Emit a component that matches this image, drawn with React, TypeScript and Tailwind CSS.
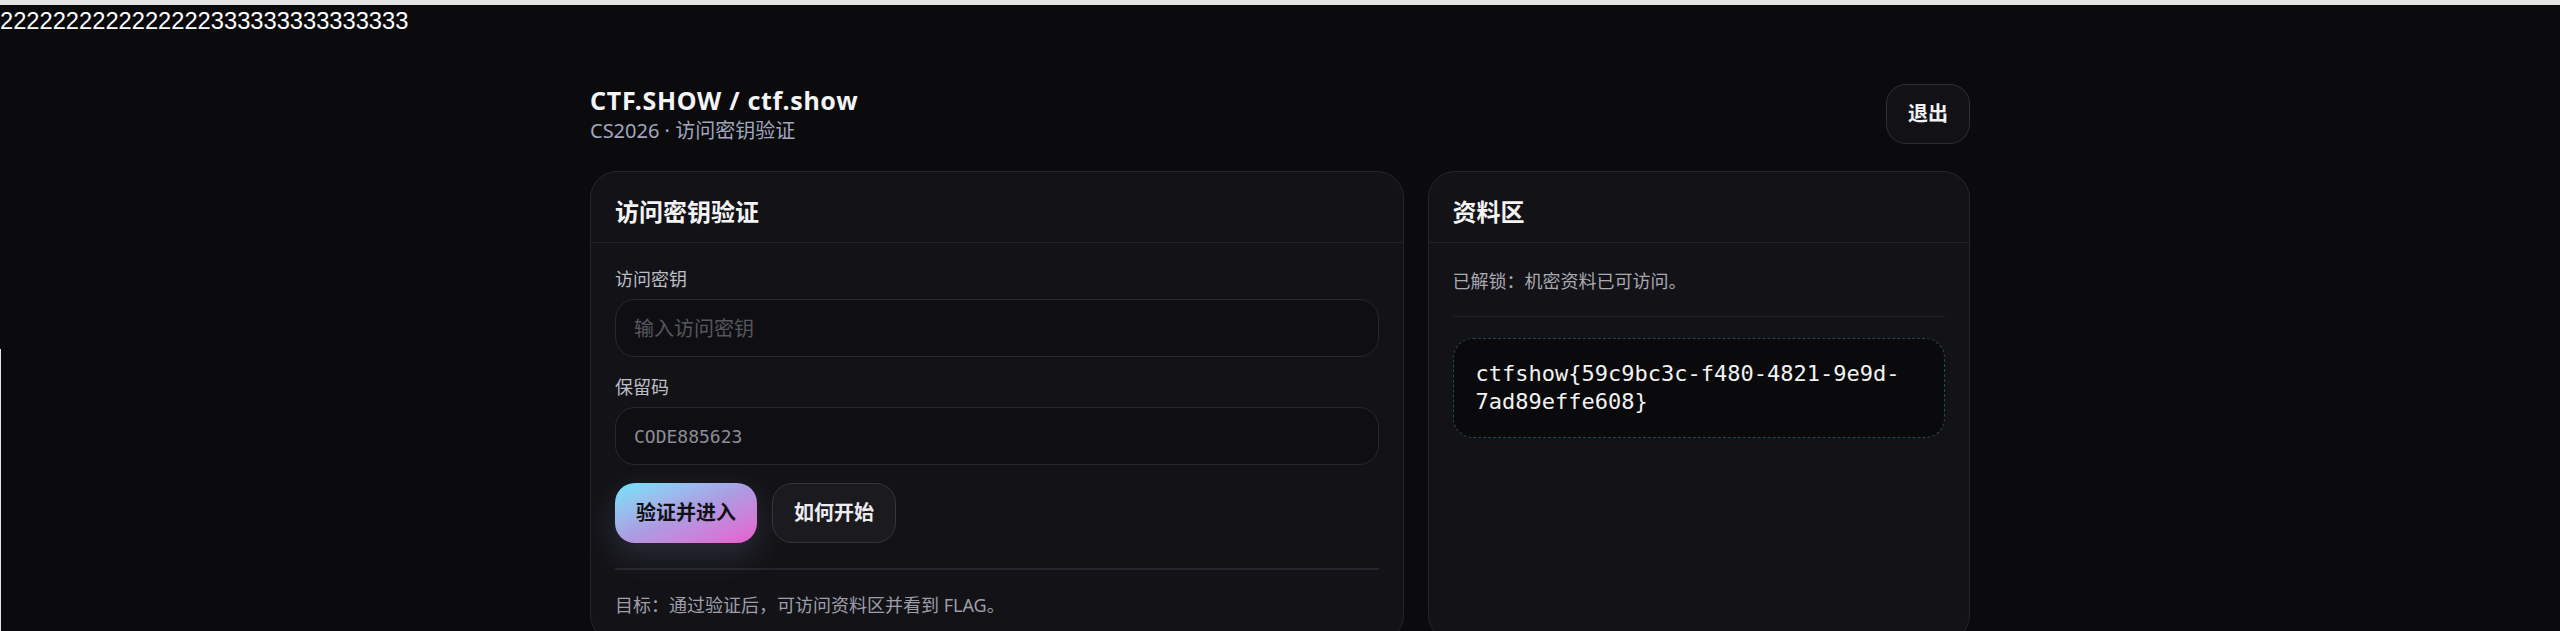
import { useState } from "react";

const sans = "font-['Noto_Sans','Noto_Sans_CJK_SC',sans-serif]";
const mono = "font-['DejaVu_Sans_Mono','Liberation_Mono',monospace]";

function CardHeader({ title }: { title: string }) {
  return (
    <div className="px-[24px] pt-[25px] pb-[15px] border-b border-[#232328]">
      <h2 className="text-[24px] leading-[30px] font-bold text-[#f4f4f5]">
        {title}
      </h2>
    </div>
  );
}

export default function App() {
  const [accessKey, setAccessKey] = useState("");
  const [code, setCode] = useState("CODE885623");

  return (
    <div className={`min-h-screen bg-[#0b0b0e] ${sans}`}>
      {/* debug strip */}
      <div className="h-[5px] bg-[#e4e4e4]" />
      <div className="h-[32px] text-[23.7px] leading-[32px] text-white font-['Liberation_Sans',sans-serif]">
        2222222222222222333333333333333
      </div>
      <div className="absolute left-0 top-[349px] bottom-0 w-px bg-[#e4e4e4]" />

      <div className="mx-auto w-[1380px] pt-[47px]">
        {/* Header */}
        <div className="flex items-start justify-between mb-[26px]">
          <div>
            <h1 className="pt-[1px] text-[25px] leading-[30px] font-bold tracking-[0.7px] text-[#f4f4f5]">
              CTF.SHOW / ctf.show
            </h1>
            <p className="pt-[2px] text-[20px] leading-[28px] text-[#a2a6bd]">
              CS2026 · 访问密钥验证
            </p>
          </div>
          <button
            type="button"
            className="h-[60px] px-[21px] rounded-[20px] border border-[#2e2e34] bg-[#121216] text-[20px] font-bold text-[#f1f1f3]"
          >
            退出
          </button>
        </div>

        <div className="grid grid-cols-[1.5fr_1fr] gap-[24px]">
          {/* Left card */}
          <div className="rounded-[27px] border border-[#25252b] bg-[#131317]">
            <CardHeader title="访问密钥验证" />
            <div className="px-[24px] pt-[24px] pb-[24px]">
              <div className="flex flex-col gap-[18px]">
                <div className="flex flex-col gap-[8px]">
                  <label
                    htmlFor="key"
                    className="text-[18px] leading-[24px] text-[#bdbdc6]"
                  >
                    访问密钥
                  </label>
                  <input
                    id="key"
                    type="text"
                    placeholder="输入访问密钥"
                    value={accessKey}
                    onChange={(e) => setAccessKey(e.target.value)}
                    className="h-[58px] px-[18px] rounded-[20px] border border-[#27272d] bg-[#0f0f13] text-[20px] text-[#d4d4d8] placeholder:text-[#56565e] outline-none"
                  />
                </div>
                <div className="flex flex-col gap-[8px]">
                  <label
                    htmlFor="code"
                    className="text-[18px] leading-[24px] text-[#bdbdc6]"
                  >
                    保留码
                  </label>
                  <input
                    id="code"
                    type="text"
                    value={code}
                    onChange={(e) => setCode(e.target.value)}
                    className={`h-[58px] px-[18px] rounded-[20px] border border-[#27272d] bg-[#0f0f13] text-[18px] text-[#8d8d95] outline-none ${mono}`}
                  />
                </div>
                <div className="flex gap-[15px]">
                  <button
                    type="button"
                    className="h-[60px] px-[21px] rounded-[20px] bg-linear-to-br from-[#6fe4fc] via-[#ab9ce2] to-[#e65ccf] text-[20px] font-bold text-[#111114] shadow-[0_12px_30px_rgba(130,140,180,0.22)]"
                  >
                    验证并进入
                  </button>
                  <button
                    type="button"
                    className="h-[60px] px-[21px] rounded-[20px] border border-[#34343a] bg-[#1a1a1f] text-[20px] font-bold text-[#ececef]"
                  >
                    如何开始
                  </button>
                </div>
              </div>
              <div className="mt-[25px] h-[2px] bg-[#25252b]" />
              <p className="mt-[23px] text-[18px] leading-[24px] text-[#9e9eaa]">
                目标：通过验证后，可访问资料区并看到 FLAG。
              </p>
            </div>
          </div>

          {/* Right card */}
          <div className="rounded-[27px] border border-[#25252b] bg-[#131317]">
            <CardHeader title="资料区" />
            <div className="px-[24px] pt-[26px]">
              <p className="pb-[23px] border-b border-[#222227] text-[18px] leading-[24px] text-[#a9a9b1]">
                已解锁：机密资料已可访问。
              </p>
              <div
                className={`mt-[21px] rounded-[20px] border border-dashed border-[#1f4c50] bg-[#0a0a0c] px-[22px] py-[21px] text-[22px] leading-[28px] text-[#f2f2f2] ${mono}`}
              >
                ctfshow{"{"}59c9bc3c-f480-4821-9e9d-7ad89effe608{"}"}
              </div>
            </div>
          </div>
        </div>
      </div>
    </div>
  );
}
